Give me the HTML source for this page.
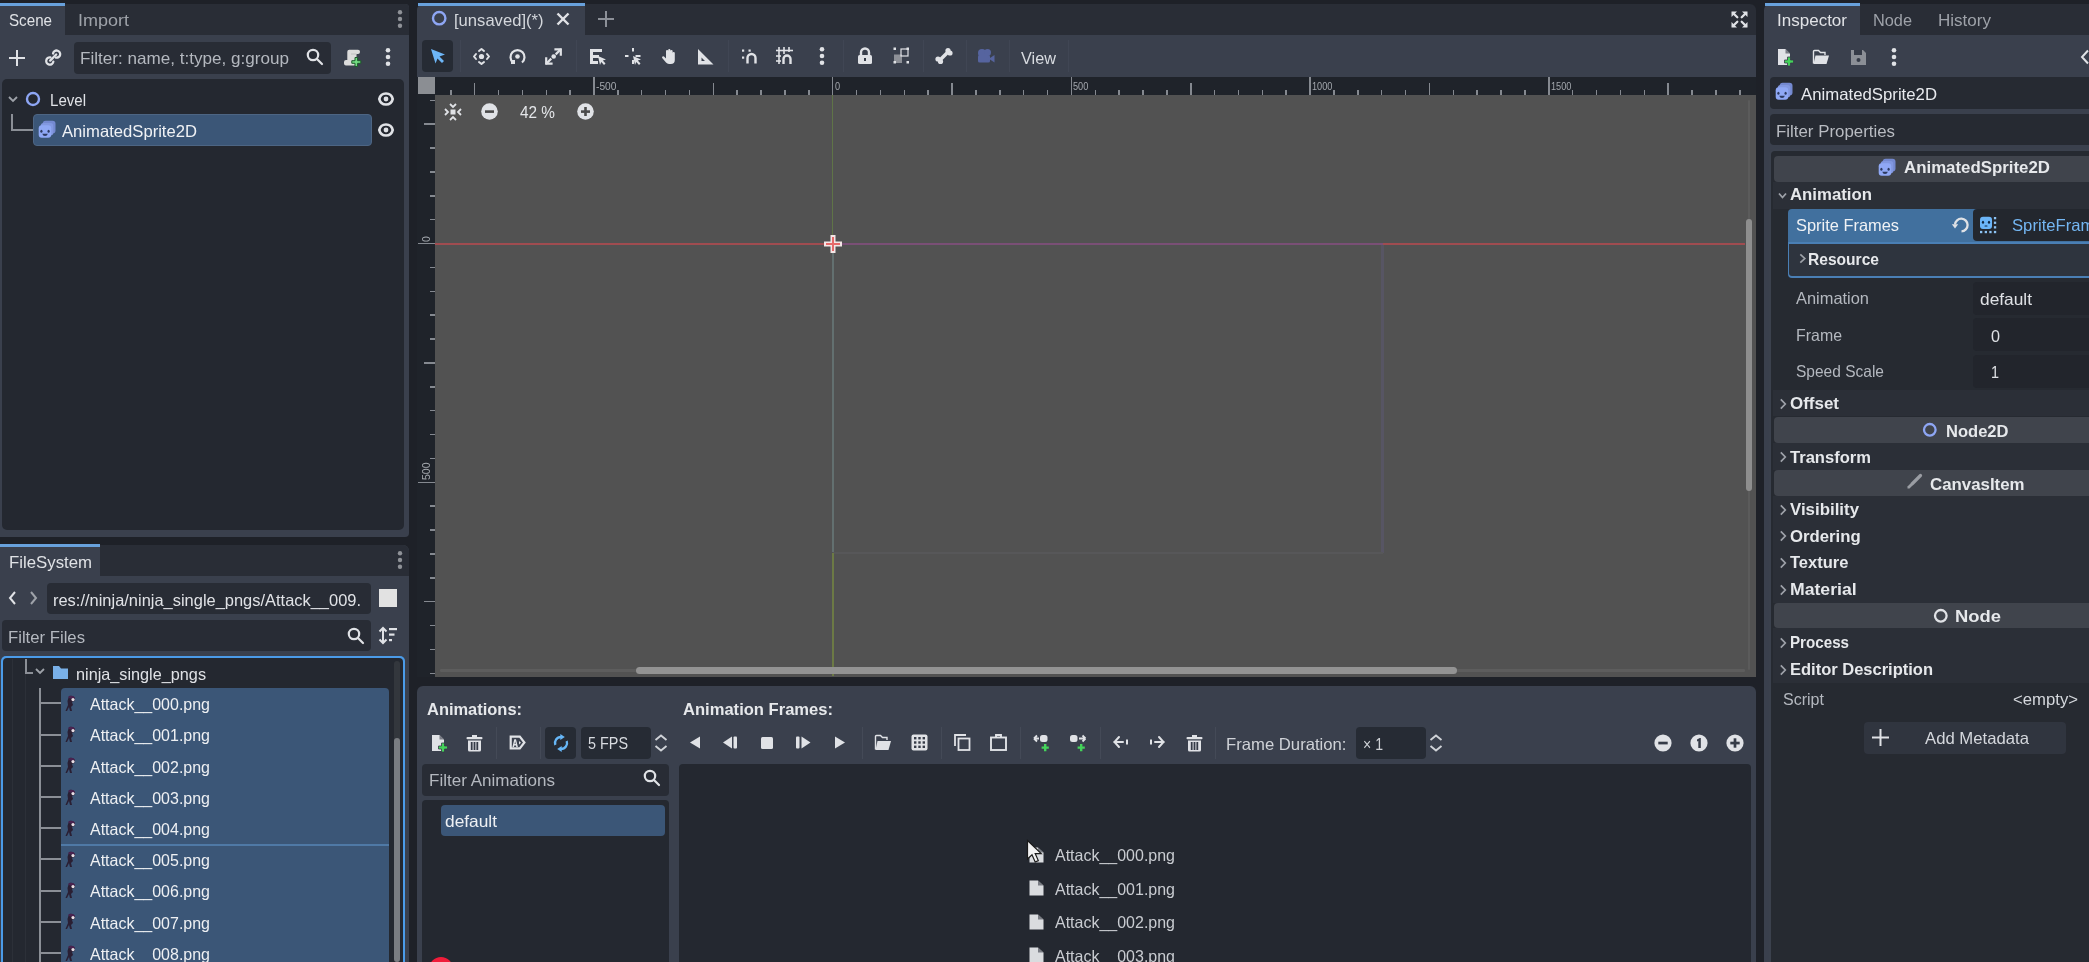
<!DOCTYPE html>
<html><head><meta charset="utf-8">
<style>
*{box-sizing:border-box;margin:0;padding:0}
body{filter:blur(0.4px)}
html,body{width:2089px;height:962px;overflow:hidden;background:#1e2128;font-family:"Liberation Sans",sans-serif;color:#dfe1e5}
.a{position:absolute}
.t{position:absolute;white-space:nowrap;line-height:20px}
svg{position:absolute;overflow:visible}
</style></head><body>

<div class="a" style="left:0px;top:4px;width:409px;height:533px;background:#3a404d;border-radius:0 4px 4px 0;"></div>
<div class="a" style="left:65px;top:4px;width:344px;height:31px;background:#292d36;border-radius:0 4px 0 0;"></div>
<div class="a" style="left:0px;top:3px;width:65px;height:3px;background:#68a1dc;border-radius:0px;"></div>
<div class="t" style="left:9px;top:10.05px;font-size:16.5px;color:#e0e2e6;transform:scaleX(0.9191);transform-origin:0 0;">Scene</div>
<div class="t" style="left:78px;top:10.05px;font-size:16.5px;color:#9ea2a9;transform:scaleX(1.0907);transform-origin:0 0;">Import</div>
<svg style="left:395.5px;top:7px;" width="8" height="24" viewBox="0 0 8 24"><g fill="#8f9298"><circle cx="4" cy="5.2" r="2.2"/><circle cx="4" cy="12" r="2.2"/><circle cx="4" cy="18.8" r="2.2"/></g></svg>
<svg style="left:9.0px;top:50.0px;" width="16" height="16" viewBox="0 0 16 16"><g stroke="#e0e2e6" stroke-width="2"><line x1="0" y1="8.0" x2="16" y2="8.0"/><line x1="8.0" y1="0" x2="8.0" y2="16"/></g></svg>
<svg style="left:44px;top:48px;" width="18" height="18" viewBox="0 0 18 18"><g stroke="#e0e2e6" stroke-width="2.3" fill="none" stroke-linecap="round"><path d="M6.43 9.45 A3.6 3.6 0 1 0 9.35 13.63"/><path d="M11.97 9.65 A3.6 3.6 0 1 0 9.05 5.48"/><path d="M6.2 12.6 L12.2 6.5"/></g></svg>
<div class="a" style="left:74px;top:42px;width:257px;height:32px;background:#282c35;border-radius:4px;"></div>
<div class="t" style="left:80px;top:47.55px;font-size:16.5px;color:#b4b8bf;transform:scaleX(1.0360);transform-origin:0 0;">Filter: name, t:type, g:group</div>
<svg style="left:306px;top:48px;" width="18" height="18" viewBox="0 0 18 18"><g stroke="#e0e2e6" stroke-width="2.2" fill="none" stroke-linecap="round"><circle cx="7" cy="7" r="5.2"/><line x1="11" y1="11" x2="16" y2="16"/></g></svg>
<svg style="left:343px;top:48px;" width="20" height="20" viewBox="0 0 20 20"><path d="M6.3 1.8 H15 a2 2 0 0 1 2 2 V4 a2 2 0 0 1 -2 2 H13.5 V15.5 a2 2 0 0 1 -2 2 H3 a2 2 0 0 1 -2 -2 V14 a2 2 0 0 1 2 -2 H4.3 V3.8 a2 2 0 0 1 2 -2Z" fill="#dcdcdc"/><path d="M8 6 H13.5" stroke="#b8b8b8" stroke-width="0.8"/><path d="M12 9.5 h2.6 v3.2 h3.2 v2.6 h-3.2 v3.2 h-2.6 v-3.2 h-3.2 v-2.6 h3.2z" fill="#72dc82" stroke="#1d5a2a" stroke-width="1"/></svg>
<svg style="left:384px;top:45px;" width="8" height="24" viewBox="0 0 8 24"><g fill="#e0e2e6"><circle cx="4" cy="5.2" r="2.3"/><circle cx="4" cy="12" r="2.3"/><circle cx="4" cy="18.8" r="2.3"/></g></svg>
<div class="a" style="left:2px;top:79px;width:402px;height:451px;background:#242830;border-radius:5px;"></div>
<svg style="left:8px;top:94px;" width="10" height="10" viewBox="0 0 10 10"><path d="M1 3 L5 7 L9 3" stroke="#9ea2a9" stroke-width="1.8" fill="none"/></svg>
<svg style="left:25px;top:90.5px;" width="16" height="16" viewBox="0 0 16 16"><circle cx="8" cy="8" r="6" stroke="#8ea6f4" stroke-width="2.4" fill="none"/></svg>
<div class="t" style="left:50px;top:89.55px;font-size:16.5px;color:#e0e2e6;transform:scaleX(0.9127);transform-origin:0 0;">Level</div>
<svg style="left:377px;top:90.5px;" width="18" height="16" viewBox="0 0 18 16"><path d="M2.3 8 C3.3 3.3 6 2.5 9 2.5 C12 2.5 14.7 3.3 15.7 8 C14.7 12.7 12 13.5 9 13.5 C6 13.5 3.3 12.7 2.3 8Z" fill="none" stroke="#e0e2e6" stroke-width="2.7"/><circle cx="9" cy="8" r="2.4" fill="#e0e2e6"/></svg>
<div class="a" style="left:11px;top:114px;width:2px;height:17px;background:#8b8f96;border-radius:0px;"></div>
<div class="a" style="left:11px;top:129px;width:22px;height:2px;background:#8b8f96;border-radius:0px;"></div>
<div class="a" style="left:33px;top:114px;width:339px;height:32px;background:#3b5677;border-radius:4px;border:1px solid #4d6583"></div>
<svg style="left:37px;top:120px;" width="20" height="20" viewBox="0 0 20 20"><g transform="scale(1.0)" transform-origin="10 10"><rect x="5.7" y="0.7" width="12.8" height="12.8" rx="3" fill="#7489d0"/><rect x="3.7" y="3" width="12.6" height="12.6" rx="3" fill="#8298e0"/><rect x="1.7" y="5.3" width="12.5" height="12.5" rx="3" fill="#8fa8f5"/><ellipse cx="4.4" cy="11.2" rx="1.1" ry="1.5" fill="#2d3a60"/><ellipse cx="11.6" cy="11.2" rx="1.1" ry="1.5" fill="#2d3a60"/><path d="M5.3 13.8 H10.8 Q10.3 16.1 8 16.1 Q5.8 16.1 5.3 13.8Z" fill="#2d3a60"/></g></svg>
<div class="t" style="left:62px;top:120.55px;font-size:16.5px;color:#f0f2f5;transform:scaleX(1.0083);transform-origin:0 0;">AnimatedSprite2D</div>
<svg style="left:377px;top:122px;" width="18" height="16" viewBox="0 0 18 16"><path d="M2.3 8 C3.3 3.3 6 2.5 9 2.5 C12 2.5 14.7 3.3 15.7 8 C14.7 12.7 12 13.5 9 13.5 C6 13.5 3.3 12.7 2.3 8Z" fill="none" stroke="#e0e2e6" stroke-width="2.7"/><circle cx="9" cy="8" r="2.4" fill="#e0e2e6"/></svg>
<div class="a" style="left:0px;top:545px;width:409px;height:417px;background:#3a404d;border-radius:0 6px 0 0;"></div>
<div class="a" style="left:100px;top:545px;width:309px;height:31px;background:#292d36;border-radius:0 6px 0 0;"></div>
<div class="a" style="left:0px;top:544px;width:100px;height:3px;background:#68a1dc;border-radius:0px;"></div>
<div class="t" style="left:9px;top:551.55px;font-size:16.5px;color:#e0e2e6;transform:scaleX(1.0172);transform-origin:0 0;">FileSystem</div>
<svg style="left:395.5px;top:548px;" width="8" height="24" viewBox="0 0 8 24"><g fill="#8f9298"><circle cx="4" cy="5.2" r="2.2"/><circle cx="4" cy="12" r="2.2"/><circle cx="4" cy="18.8" r="2.2"/></g></svg>
<svg style="left:6px;top:590px;" width="12" height="16" viewBox="0 0 12 16"><path d="M9 2 L4 8 L9 14" stroke="#e0e2e6" stroke-width="2" fill="none"/></svg>
<svg style="left:28px;top:590px;" width="12" height="16" viewBox="0 0 12 16"><path d="M3 2 L8 8 L3 14" stroke="#9ea2a9" stroke-width="2" fill="none"/></svg>
<div class="a" style="left:47px;top:583px;width:324px;height:31px;background:#282c35;border-radius:4px;"></div>
<div class="t" style="left:53px;top:589.55px;font-size:16.5px;color:#e0e2e6;transform:scaleX(0.9964);transform-origin:0 0;">res://ninja/ninja_single_pngs/Attack__009.</div>
<div class="a" style="left:379px;top:589px;width:18px;height:18px;background:#e2e2e2;border-radius:0px;"></div>
<div class="a" style="left:2px;top:620px;width:369px;height:31px;background:#282c35;border-radius:4px;"></div>
<div class="t" style="left:8px;top:626.55px;font-size:16.5px;color:#b4b8bf;transform:scaleX(1.0121);transform-origin:0 0;">Filter Files</div>
<svg style="left:347px;top:627px;" width="18" height="18" viewBox="0 0 18 18"><g stroke="#e0e2e6" stroke-width="2.2" fill="none" stroke-linecap="round"><circle cx="7" cy="7" r="5.2"/><line x1="11" y1="11" x2="16" y2="16"/></g></svg>
<svg style="left:378px;top:626px;" width="20" height="20" viewBox="0 0 20 20"><g fill="none" stroke="#e0e2e6" stroke-width="2"><path d="M5 2 V17"/><path d="M1.5 5.5 L5 2 L8.5 5.5"/><path d="M1.5 13.5 L5 17 L8.5 13.5"/></g><g fill="#e0e2e6"><rect x="11" y="2" width="8" height="2.2"/><rect x="11" y="7.5" width="5.5" height="2.2"/><rect x="11" y="13" width="3" height="2.2"/></g></svg>
<div class="a" style="left:1px;top:656px;width:404px;height:306px;background:#4b9be8;border-radius:5px 5px 0 0;"></div>
<div class="a" style="left:3px;top:658px;width:400px;height:304px;background:#242830;border-radius:4px 4px 0 0;"></div>
<div class="a" style="left:12px;top:659px;width:1px;height:303px;background:#2c3038;border-radius:0px;"></div>
<div class="a" style="left:25px;top:659px;width:1px;height:303px;background:#2c3038;border-radius:0px;"></div>
<div class="a" style="left:25px;top:659px;width:2px;height:15px;background:#8b8f96;border-radius:0px;"></div>
<div class="a" style="left:25px;top:672px;width:8px;height:2px;background:#8b8f96;border-radius:0px;"></div>
<svg style="left:35px;top:666px;" width="10" height="10" viewBox="0 0 10 10"><path d="M1 3 L5 7 L9 3" stroke="#9ea2a9" stroke-width="1.8" fill="none"/></svg>
<svg style="left:52px;top:664px;" width="17" height="16" viewBox="0 0 17 16"><path d="M1 2 h6 l2 2.5 h7 v10.5 h-15z" fill="#79b0e8"/></svg>
<div class="t" style="left:76px;top:663.55px;font-size:16.5px;color:#e0e2e6;transform:scaleX(0.9841);transform-origin:0 0;">ninja_single_pngs</div>
<div class="a" style="left:394px;top:661px;width:6px;height:301px;background:#33373d;border-radius:3px;"></div>
<div class="a" style="left:394px;top:738px;width:6px;height:224px;background:#7a7d82;border-radius:3px;"></div>
<div class="a" style="left:39px;top:688px;width:2px;height:274px;background:#8b8f96;border-radius:0px;"></div>
<div class="a" style="left:61px;top:688px;width:328px;height:274px;background:#3b5677;border-radius:4px 4px 0 0;"></div>
<div class="a" style="left:61px;top:844px;width:328px;height:1.5px;background:#4f79a6;border-radius:0px;"></div>
<div class="a" style="left:40px;top:702.4px;width:21px;height:2px;background:#8b8f96;border-radius:0px;"></div>
<svg style="left:65px;top:694.9px;" width="12" height="17" viewBox="0 0 12 17"><path d="M4 1 Q8 0 10 3 L9.5 6 L7 7 L8 10 L6 12 L7 16 L5 16 L4 12 L2 16 L0.5 16 L3 10 L2.5 6Z" fill="#2a1f33"/><path d="M3 2 Q7 -0.5 10 2.5 L9 4 L5 3.5Z" fill="#4a2350"/><circle cx="8" cy="4.6" r="1.6" fill="#e8e0e6"/></svg>
<div class="t" style="left:90px;top:694.25px;font-size:16.5px;color:#eef0f3;transform:scaleX(0.9690);transform-origin:0 0;">Attack__000.png</div>
<div class="a" style="left:40px;top:733.6px;width:21px;height:2px;background:#8b8f96;border-radius:0px;"></div>
<svg style="left:65px;top:726.1px;" width="12" height="17" viewBox="0 0 12 17"><path d="M4 1 Q8 0 10 3 L9.5 6 L7 7 L8 10 L6 12 L7 16 L5 16 L4 12 L2 16 L0.5 16 L3 10 L2.5 6Z" fill="#2a1f33"/><path d="M3 2 Q7 -0.5 10 2.5 L9 4 L5 3.5Z" fill="#4a2350"/><circle cx="8" cy="4.6" r="1.6" fill="#e8e0e6"/></svg>
<div class="t" style="left:90px;top:725.45px;font-size:16.5px;color:#eef0f3;transform:scaleX(0.9690);transform-origin:0 0;">Attack__001.png</div>
<div class="a" style="left:40px;top:764.8px;width:21px;height:2px;background:#8b8f96;border-radius:0px;"></div>
<svg style="left:65px;top:757.3px;" width="12" height="17" viewBox="0 0 12 17"><path d="M4 1 Q8 0 10 3 L9.5 6 L7 7 L8 10 L6 12 L7 16 L5 16 L4 12 L2 16 L0.5 16 L3 10 L2.5 6Z" fill="#2a1f33"/><path d="M3 2 Q7 -0.5 10 2.5 L9 4 L5 3.5Z" fill="#4a2350"/><circle cx="8" cy="4.6" r="1.6" fill="#e8e0e6"/></svg>
<div class="t" style="left:90px;top:756.65px;font-size:16.5px;color:#eef0f3;transform:scaleX(0.9690);transform-origin:0 0;">Attack__002.png</div>
<div class="a" style="left:40px;top:796.0px;width:21px;height:2px;background:#8b8f96;border-radius:0px;"></div>
<svg style="left:65px;top:788.5px;" width="12" height="17" viewBox="0 0 12 17"><path d="M4 1 Q8 0 10 3 L9.5 6 L7 7 L8 10 L6 12 L7 16 L5 16 L4 12 L2 16 L0.5 16 L3 10 L2.5 6Z" fill="#2a1f33"/><path d="M3 2 Q7 -0.5 10 2.5 L9 4 L5 3.5Z" fill="#4a2350"/><circle cx="8" cy="4.6" r="1.6" fill="#e8e0e6"/></svg>
<div class="t" style="left:90px;top:787.85px;font-size:16.5px;color:#eef0f3;transform:scaleX(0.9690);transform-origin:0 0;">Attack__003.png</div>
<div class="a" style="left:40px;top:827.1999999999999px;width:21px;height:2px;background:#8b8f96;border-radius:0px;"></div>
<svg style="left:65px;top:819.6999999999999px;" width="12" height="17" viewBox="0 0 12 17"><path d="M4 1 Q8 0 10 3 L9.5 6 L7 7 L8 10 L6 12 L7 16 L5 16 L4 12 L2 16 L0.5 16 L3 10 L2.5 6Z" fill="#2a1f33"/><path d="M3 2 Q7 -0.5 10 2.5 L9 4 L5 3.5Z" fill="#4a2350"/><circle cx="8" cy="4.6" r="1.6" fill="#e8e0e6"/></svg>
<div class="t" style="left:90px;top:819.05px;font-size:16.5px;color:#eef0f3;transform:scaleX(0.9690);transform-origin:0 0;">Attack__004.png</div>
<div class="a" style="left:40px;top:858.4px;width:21px;height:2px;background:#8b8f96;border-radius:0px;"></div>
<svg style="left:65px;top:850.9px;" width="12" height="17" viewBox="0 0 12 17"><path d="M4 1 Q8 0 10 3 L9.5 6 L7 7 L8 10 L6 12 L7 16 L5 16 L4 12 L2 16 L0.5 16 L3 10 L2.5 6Z" fill="#2a1f33"/><path d="M3 2 Q7 -0.5 10 2.5 L9 4 L5 3.5Z" fill="#4a2350"/><circle cx="8" cy="4.6" r="1.6" fill="#e8e0e6"/></svg>
<div class="t" style="left:90px;top:850.25px;font-size:16.5px;color:#eef0f3;transform:scaleX(0.9690);transform-origin:0 0;">Attack__005.png</div>
<div class="a" style="left:40px;top:889.5999999999999px;width:21px;height:2px;background:#8b8f96;border-radius:0px;"></div>
<svg style="left:65px;top:882.0999999999999px;" width="12" height="17" viewBox="0 0 12 17"><path d="M4 1 Q8 0 10 3 L9.5 6 L7 7 L8 10 L6 12 L7 16 L5 16 L4 12 L2 16 L0.5 16 L3 10 L2.5 6Z" fill="#2a1f33"/><path d="M3 2 Q7 -0.5 10 2.5 L9 4 L5 3.5Z" fill="#4a2350"/><circle cx="8" cy="4.6" r="1.6" fill="#e8e0e6"/></svg>
<div class="t" style="left:90px;top:881.45px;font-size:16.5px;color:#eef0f3;transform:scaleX(0.9690);transform-origin:0 0;">Attack__006.png</div>
<div class="a" style="left:40px;top:920.8px;width:21px;height:2px;background:#8b8f96;border-radius:0px;"></div>
<svg style="left:65px;top:913.3px;" width="12" height="17" viewBox="0 0 12 17"><path d="M4 1 Q8 0 10 3 L9.5 6 L7 7 L8 10 L6 12 L7 16 L5 16 L4 12 L2 16 L0.5 16 L3 10 L2.5 6Z" fill="#2a1f33"/><path d="M3 2 Q7 -0.5 10 2.5 L9 4 L5 3.5Z" fill="#4a2350"/><circle cx="8" cy="4.6" r="1.6" fill="#e8e0e6"/></svg>
<div class="t" style="left:90px;top:912.65px;font-size:16.5px;color:#eef0f3;transform:scaleX(0.9690);transform-origin:0 0;">Attack__007.png</div>
<div class="a" style="left:40px;top:952.0px;width:21px;height:2px;background:#8b8f96;border-radius:0px;"></div>
<svg style="left:65px;top:944.5px;" width="12" height="17" viewBox="0 0 12 17"><path d="M4 1 Q8 0 10 3 L9.5 6 L7 7 L8 10 L6 12 L7 16 L5 16 L4 12 L2 16 L0.5 16 L3 10 L2.5 6Z" fill="#2a1f33"/><path d="M3 2 Q7 -0.5 10 2.5 L9 4 L5 3.5Z" fill="#4a2350"/><circle cx="8" cy="4.6" r="1.6" fill="#e8e0e6"/></svg>
<div class="t" style="left:90px;top:943.85px;font-size:16.5px;color:#eef0f3;transform:scaleX(0.9690);transform-origin:0 0;">Attack__008.png</div>
<div class="a" style="left:417px;top:4px;width:1339px;height:31px;background:#292d36;border-radius:6px 6px 0 0;"></div>
<div class="a" style="left:417px;top:4px;width:168px;height:31px;background:#3a404d;border-radius:6px 0 0 0;"></div>
<div class="a" style="left:418px;top:3px;width:167px;height:3px;background:#68a1dc;border-radius:0px;"></div>
<svg style="left:430.8px;top:10.400000000000002px;" width="16.4" height="16.4" viewBox="0 0 16.4 16.4"><circle cx="8.2" cy="8.2" r="6.2" stroke="#8ea6f4" stroke-width="2.4" fill="none"/></svg>
<div class="t" style="left:453.5px;top:9.55px;font-size:16.5px;color:#d4d7dc;transform:scaleX(1.0061);transform-origin:0 0;">[unsaved](*)</div>
<svg style="left:556px;top:12px;" width="14" height="14" viewBox="0 0 14 14"><g stroke="#e0e2e6" stroke-width="2.4"><line x1="1.5" y1="1.5" x2="12.5" y2="12.5"/><line x1="12.5" y1="1.5" x2="1.5" y2="12.5"/></g></svg>
<svg style="left:597.5px;top:11.0px;" width="16" height="16" viewBox="0 0 16 16"><g stroke="#8c9098" stroke-width="2"><line x1="0" y1="8.0" x2="16" y2="8.0"/><line x1="8.0" y1="0" x2="8.0" y2="16"/></g></svg>
<svg style="left:1731px;top:10.5px;" width="17" height="17" viewBox="0 0 17 17"><g fill="#e0e2e6"><path d="M0.5 0.5 H6 L0.5 6Z"/><path d="M16.5 0.5 H11 L16.5 6Z"/><path d="M0.5 16.5 H6 L0.5 11Z"/><path d="M16.5 16.5 H11 L16.5 11Z"/></g><g stroke="#e0e2e6" stroke-width="2.3" stroke-linecap="round"><path d="M2 2 L6.3 6.3"/><path d="M15 2 L10.7 6.3"/><path d="M2 15 L6.3 10.7"/><path d="M15 15 L10.7 10.7"/></g></svg>
<div class="a" style="left:417px;top:35px;width:1339px;height:42px;background:#3a404d;border-radius:0px;"></div>
<div class="a" style="left:422px;top:40px;width:31px;height:32px;background:#262b34;border-radius:4px;"></div>
<div class="a" style="left:459.5px;top:40px;width:1px;height:32px;background:#404654;border-radius:0px;"></div>
<div class="a" style="left:575.5px;top:40px;width:1px;height:32px;background:#404654;border-radius:0px;"></div>
<div class="a" style="left:727.5px;top:40px;width:1px;height:32px;background:#404654;border-radius:0px;"></div>
<div class="a" style="left:843px;top:40px;width:1px;height:32px;background:#404654;border-radius:0px;"></div>
<div class="a" style="left:922.5px;top:40px;width:1px;height:32px;background:#404654;border-radius:0px;"></div>
<div class="a" style="left:965.5px;top:40px;width:1px;height:32px;background:#404654;border-radius:0px;"></div>
<div class="a" style="left:1008.5px;top:40px;width:1px;height:32px;background:#404654;border-radius:0px;"></div>
<div class="a" style="left:1068px;top:40px;width:1px;height:32px;background:#404654;border-radius:0px;"></div>
<svg style="left:429px;top:47px;" width="18" height="18" viewBox="0 0 18 18"><path d="M2 2 L16 7.5 L10.5 9.5 L15 14 L13 16 L8.5 11.5 L6.5 16.5 Z" fill="#6db6f7"/></svg>
<svg style="left:473px;top:47.5px;" width="17" height="17" viewBox="0 0 17 17"><g fill="#e0e2e6"><circle cx="8.5" cy="8.5" r="2.6"/></g><g stroke="#e0e2e6" stroke-width="2" fill="none" stroke-linecap="round" stroke-linejoin="round"><path d="M6 3 L8.5 1 L11 3"/><path d="M6 14 L8.5 16 L11 14"/><path d="M3 6 L1 8.5 L3 11"/><path d="M14 6 L16 8.5 L14 11"/></g></svg>
<svg style="left:509px;top:47.5px;" width="17" height="17" viewBox="0 0 17 17"><circle cx="8.5" cy="8.5" r="2.3" fill="#e0e2e6"/><path d="M4 14.5 A7 7 0 1 1 13 14.5" stroke="#e0e2e6" stroke-width="2.2" fill="none"/><path d="M2 12 L6 12 L6 16 L2 16z" fill="#e0e2e6"/></svg>
<svg style="left:545px;top:47.5px;" width="17" height="17" viewBox="0 0 17 17"><circle cx="8.7" cy="8.5" r="2.3" fill="#e0e2e6"/><g stroke="#e0e2e6" stroke-width="2.2" fill="none" stroke-linecap="square"><path d="M10.5 1.3 H15.8 V6.6"/><path d="M15.3 1.8 L11.5 5.6"/><path d="M1.2 10.4 V15.7 H6.5"/><path d="M1.7 15.2 L5.5 11.4"/></g></svg>
<svg style="left:589px;top:48px;" width="18" height="17" viewBox="0 0 18 17"><path d="M1 1 H13 V4 H4 V7 H10 V10 H4 V13 H9 V16 H1Z" fill="#e0e2e6"/><path d="M9 8 L17 11.5 L13.8 12.5 L16.5 15.5 L15 17 L12.3 14 L11 17Z" fill="#e0e2e6"/></svg>
<svg style="left:625px;top:48px;" width="17" height="17" viewBox="0 0 17 17"><g fill="#e0e2e6"><rect x="7" y="0" width="2" height="3.5"/><rect x="0" y="7" width="3.5" height="2"/><rect x="10.5" y="7" width="5" height="2"/><rect x="7" y="12" width="2" height="4"/><path d="M8 8 L16 11.5 L12.8 12.5 L15.5 15.5 L14 17 L11.3 14 L10 17Z"/></g></svg>
<svg style="left:661px;top:47.5px;" width="17" height="17" viewBox="0 0 17 17"><path d="M5 3 a1.1 1.1 0 0 1 2.2 0 V8 V2 a1.1 1.1 0 0 1 2.2 0 V8 V3 a1.1 1.1 0 0 1 2.2 0 V8 V5 a1.1 1.1 0 0 1 2.2 0 V12 a4 4 0 0 1 -4 4 H8 a4 4 0 0 1 -3 -1.5 L1.2 10 a1.2 1.2 0 0 1 1.8 -1.5 L5 10.5Z" fill="#e0e2e6"/></svg>
<svg style="left:697px;top:47.5px;" width="17" height="17" viewBox="0 0 17 17"><path d="M1 1 L16.5 16.5 H1Z M4.5 9.5 V13 H8Z" fill="#e0e2e6" fill-rule="evenodd"/></svg>
<svg style="left:741px;top:47px;" width="18" height="18" viewBox="0 0 18 18"><g fill="#e0e2e6"><rect x="1" y="2.5" width="2.2" height="2.2"/><rect x="1" y="9.5" width="2.2" height="2.2"/><rect x="7.5" y="2.5" width="2.2" height="2.2"/></g><path d="M6.5 16.5 V11 a4 4 0 0 1 8 0 V16.5" stroke="#e0e2e6" stroke-width="2.4" fill="none"/></svg>
<svg style="left:776px;top:47px;" width="18" height="18" viewBox="0 0 18 18"><g stroke="#e0e2e6" stroke-width="1.6"><line x1="3" y1="0" x2="3" y2="17"/><line x1="8" y1="0" x2="8" y2="7"/><line x1="0" y1="3.5" x2="17" y2="3.5"/><line x1="0" y1="9" x2="5" y2="9"/><line x1="0" y1="14" x2="5" y2="14"/><line x1="13" y1="0" x2="13" y2="5"/></g><path d="M7.5 17 V12 a3.5 3.5 0 0 1 7 0 V17" stroke="#e0e2e6" stroke-width="2.4" fill="none"/></svg>
<svg style="left:817.5px;top:44px;" width="8" height="24" viewBox="0 0 8 24"><g fill="#e0e2e6"><circle cx="4" cy="5.2" r="2.3"/><circle cx="4" cy="12" r="2.3"/><circle cx="4" cy="18.8" r="2.3"/></g></svg>
<svg style="left:857px;top:47px;" width="16" height="18" viewBox="0 0 16 18"><path d="M4 8 V5.5 a4 4 0 0 1 8 0 V8" stroke="#e0e2e6" stroke-width="2.4" fill="none"/><rect x="1" y="8" width="14" height="9" rx="1.5" fill="#e0e2e6"/><rect x="7" y="11" width="2" height="3" fill="#353b47"/></svg>
<svg style="left:893px;top:47px;" width="17" height="17" viewBox="0 0 17 17"><rect x="1" y="7.5" width="8" height="8.5" fill="#8d9097"/><rect x="8" y="2" width="7" height="7" stroke="#e0e2e6" stroke-width="1.2" fill="none"/><g fill="#e0e2e6"><rect x="0.5" y="0.5" width="2.5" height="2.5"/><rect x="13.5" y="0.5" width="2.5" height="2.5"/><rect x="0.5" y="14" width="2.5" height="2.5"/><rect x="13.5" y="14" width="2.5" height="2.5"/></g></svg>
<svg style="left:935px;top:47px;" width="18" height="18" viewBox="0 0 18 18"><g fill="#e0e2e6"><circle cx="13" cy="3.5" r="2.6"/><circle cx="15" cy="6" r="2.6"/><circle cx="3" cy="12" r="2.6"/><circle cx="5.5" cy="14.5" r="2.6"/><path d="M11.5 4 L14 6.5 L6.5 14 L4 11.5Z"/></g></svg>
<svg style="left:977px;top:48px;" width="18" height="16" viewBox="0 0 18 16"><g fill="#56649f"><circle cx="5" cy="5" r="4"/><circle cx="10.5" cy="4.5" r="3.5"/><rect x="1" y="7" width="12" height="7.5" rx="1.5"/><path d="M13 10 L17.5 7 V14.5 L13 11.5Z"/></g></svg>
<div class="t" style="left:1021px;top:47.55px;font-size:16.5px;color:#d8dbe0;transform:scaleX(0.9869);transform-origin:0 0;">View</div>
<div class="a" style="left:417px;top:77px;width:1339px;height:18px;background:#1f232a;border-radius:0px;"></div>
<div class="a" style="left:417px;top:95px;width:18px;height:582px;background:#1f232a;border-radius:0px;"></div>
<div class="a" style="left:418px;top:77px;width:17px;height:17px;background:#8b8e93;border-radius:0px;"></div>
<div class="a" style="left:450.0px;top:90px;width:1.6px;height:4.5px;background:#858990;border-radius:0px;"></div>
<div class="a" style="left:473.9px;top:83px;width:1.6px;height:11.5px;background:#858990;border-radius:0px;"></div>
<div class="a" style="left:497.7px;top:90px;width:1.6px;height:4.5px;background:#858990;border-radius:0px;"></div>
<div class="a" style="left:521.6px;top:90px;width:1.6px;height:4.5px;background:#858990;border-radius:0px;"></div>
<div class="a" style="left:545.5px;top:90px;width:1.6px;height:4.5px;background:#858990;border-radius:0px;"></div>
<div class="a" style="left:569.3px;top:90px;width:1.6px;height:4.5px;background:#858990;border-radius:0px;"></div>
<div class="a" style="left:593.2px;top:77px;width:1.6px;height:17.5px;background:#858990;border-radius:0px;"></div>
<div class="t" style="left:596.0px;top:76.03px;font-size:10.5px;color:#a3a7ad;transform:scaleX(0.9708);transform-origin:0 0;">-500</div>
<div class="a" style="left:617.1px;top:90px;width:1.6px;height:4.5px;background:#858990;border-radius:0px;"></div>
<div class="a" style="left:640.9px;top:90px;width:1.6px;height:4.5px;background:#858990;border-radius:0px;"></div>
<div class="a" style="left:664.8px;top:90px;width:1.6px;height:4.5px;background:#858990;border-radius:0px;"></div>
<div class="a" style="left:688.7px;top:90px;width:1.6px;height:4.5px;background:#858990;border-radius:0px;"></div>
<div class="a" style="left:712.6px;top:83px;width:1.6px;height:11.5px;background:#858990;border-radius:0px;"></div>
<div class="a" style="left:736.4px;top:90px;width:1.6px;height:4.5px;background:#858990;border-radius:0px;"></div>
<div class="a" style="left:760.3px;top:90px;width:1.6px;height:4.5px;background:#858990;border-radius:0px;"></div>
<div class="a" style="left:784.2px;top:90px;width:1.6px;height:4.5px;background:#858990;border-radius:0px;"></div>
<div class="a" style="left:808.0px;top:90px;width:1.6px;height:4.5px;background:#858990;border-radius:0px;"></div>
<div class="a" style="left:831.9px;top:77px;width:1.6px;height:17.5px;background:#858990;border-radius:0px;"></div>
<div class="t" style="left:834.7px;top:76.03px;font-size:10.5px;color:#a3a7ad;transform:scaleX(0.8734);transform-origin:0 0;">0</div>
<div class="a" style="left:855.8px;top:90px;width:1.6px;height:4.5px;background:#858990;border-radius:0px;"></div>
<div class="a" style="left:879.6px;top:90px;width:1.6px;height:4.5px;background:#858990;border-radius:0px;"></div>
<div class="a" style="left:903.5px;top:90px;width:1.6px;height:4.5px;background:#858990;border-radius:0px;"></div>
<div class="a" style="left:927.4px;top:90px;width:1.6px;height:4.5px;background:#858990;border-radius:0px;"></div>
<div class="a" style="left:951.3px;top:83px;width:1.6px;height:11.5px;background:#858990;border-radius:0px;"></div>
<div class="a" style="left:975.1px;top:90px;width:1.6px;height:4.5px;background:#858990;border-radius:0px;"></div>
<div class="a" style="left:999.0px;top:90px;width:1.6px;height:4.5px;background:#858990;border-radius:0px;"></div>
<div class="a" style="left:1022.9px;top:90px;width:1.6px;height:4.5px;background:#858990;border-radius:0px;"></div>
<div class="a" style="left:1046.7px;top:90px;width:1.6px;height:4.5px;background:#858990;border-radius:0px;"></div>
<div class="a" style="left:1070.6px;top:77px;width:1.6px;height:17.5px;background:#858990;border-radius:0px;"></div>
<div class="t" style="left:1073.4px;top:76.03px;font-size:10.5px;color:#a3a7ad;transform:scaleX(0.8734);transform-origin:0 0;">500</div>
<div class="a" style="left:1094.5px;top:90px;width:1.6px;height:4.5px;background:#858990;border-radius:0px;"></div>
<div class="a" style="left:1118.3px;top:90px;width:1.6px;height:4.5px;background:#858990;border-radius:0px;"></div>
<div class="a" style="left:1142.2px;top:90px;width:1.6px;height:4.5px;background:#858990;border-radius:0px;"></div>
<div class="a" style="left:1166.1px;top:90px;width:1.6px;height:4.5px;background:#858990;border-radius:0px;"></div>
<div class="a" style="left:1190.0px;top:83px;width:1.6px;height:11.5px;background:#858990;border-radius:0px;"></div>
<div class="a" style="left:1213.8px;top:90px;width:1.6px;height:4.5px;background:#858990;border-radius:0px;"></div>
<div class="a" style="left:1237.7px;top:90px;width:1.6px;height:4.5px;background:#858990;border-radius:0px;"></div>
<div class="a" style="left:1261.6px;top:90px;width:1.6px;height:4.5px;background:#858990;border-radius:0px;"></div>
<div class="a" style="left:1285.4px;top:90px;width:1.6px;height:4.5px;background:#858990;border-radius:0px;"></div>
<div class="a" style="left:1309.3px;top:77px;width:1.6px;height:17.5px;background:#858990;border-radius:0px;"></div>
<div class="t" style="left:1312.1px;top:76.03px;font-size:10.5px;color:#a3a7ad;transform:scaleX(0.8734);transform-origin:0 0;">1000</div>
<div class="a" style="left:1333.2px;top:90px;width:1.6px;height:4.5px;background:#858990;border-radius:0px;"></div>
<div class="a" style="left:1357.0px;top:90px;width:1.6px;height:4.5px;background:#858990;border-radius:0px;"></div>
<div class="a" style="left:1380.9px;top:90px;width:1.6px;height:4.5px;background:#858990;border-radius:0px;"></div>
<div class="a" style="left:1404.8px;top:90px;width:1.6px;height:4.5px;background:#858990;border-radius:0px;"></div>
<div class="a" style="left:1428.7px;top:83px;width:1.6px;height:11.5px;background:#858990;border-radius:0px;"></div>
<div class="a" style="left:1452.5px;top:90px;width:1.6px;height:4.5px;background:#858990;border-radius:0px;"></div>
<div class="a" style="left:1476.4px;top:90px;width:1.6px;height:4.5px;background:#858990;border-radius:0px;"></div>
<div class="a" style="left:1500.3px;top:90px;width:1.6px;height:4.5px;background:#858990;border-radius:0px;"></div>
<div class="a" style="left:1524.1px;top:90px;width:1.6px;height:4.5px;background:#858990;border-radius:0px;"></div>
<div class="a" style="left:1548.0px;top:77px;width:1.6px;height:17.5px;background:#858990;border-radius:0px;"></div>
<div class="t" style="left:1550.8px;top:76.03px;font-size:10.5px;color:#a3a7ad;transform:scaleX(0.8734);transform-origin:0 0;">1500</div>
<div class="a" style="left:1571.9px;top:90px;width:1.6px;height:4.5px;background:#858990;border-radius:0px;"></div>
<div class="a" style="left:1595.7px;top:90px;width:1.6px;height:4.5px;background:#858990;border-radius:0px;"></div>
<div class="a" style="left:1619.6px;top:90px;width:1.6px;height:4.5px;background:#858990;border-radius:0px;"></div>
<div class="a" style="left:1643.5px;top:90px;width:1.6px;height:4.5px;background:#858990;border-radius:0px;"></div>
<div class="a" style="left:1667.4px;top:83px;width:1.6px;height:11.5px;background:#858990;border-radius:0px;"></div>
<div class="a" style="left:1691.2px;top:90px;width:1.6px;height:4.5px;background:#858990;border-radius:0px;"></div>
<div class="a" style="left:1715.1px;top:90px;width:1.6px;height:4.5px;background:#858990;border-radius:0px;"></div>
<div class="a" style="left:1739.0px;top:90px;width:1.6px;height:4.5px;background:#858990;border-radius:0px;"></div>
<div class="a" style="left:430px;top:99.6px;width:5px;height:1.6px;background:#858990;border-radius:0px;"></div>
<div class="a" style="left:424px;top:123.4px;width:11.5px;height:1.6px;background:#858990;border-radius:0px;"></div>
<div class="a" style="left:430px;top:147.3px;width:5px;height:1.6px;background:#858990;border-radius:0px;"></div>
<div class="a" style="left:430px;top:171.2px;width:5px;height:1.6px;background:#858990;border-radius:0px;"></div>
<div class="a" style="left:430px;top:195.1px;width:5px;height:1.6px;background:#858990;border-radius:0px;"></div>
<div class="a" style="left:430px;top:218.9px;width:5px;height:1.6px;background:#858990;border-radius:0px;"></div>
<div class="a" style="left:418px;top:242.8px;width:17.5px;height:1.6px;background:#858990;border-radius:0px;"></div>
<div class="t" style="left:421px;top:241.6px;font-size:10.5px;color:#a3a7ad;transform:rotate(-90deg);transform-origin:0 0;line-height:11px">0</div>
<div class="a" style="left:430px;top:266.7px;width:5px;height:1.6px;background:#858990;border-radius:0px;"></div>
<div class="a" style="left:430px;top:290.5px;width:5px;height:1.6px;background:#858990;border-radius:0px;"></div>
<div class="a" style="left:430px;top:314.4px;width:5px;height:1.6px;background:#858990;border-radius:0px;"></div>
<div class="a" style="left:430px;top:338.3px;width:5px;height:1.6px;background:#858990;border-radius:0px;"></div>
<div class="a" style="left:424px;top:362.1px;width:11.5px;height:1.6px;background:#858990;border-radius:0px;"></div>
<div class="a" style="left:430px;top:386.0px;width:5px;height:1.6px;background:#858990;border-radius:0px;"></div>
<div class="a" style="left:430px;top:409.9px;width:5px;height:1.6px;background:#858990;border-radius:0px;"></div>
<div class="a" style="left:430px;top:433.8px;width:5px;height:1.6px;background:#858990;border-radius:0px;"></div>
<div class="a" style="left:430px;top:457.6px;width:5px;height:1.6px;background:#858990;border-radius:0px;"></div>
<div class="a" style="left:418px;top:481.5px;width:17.5px;height:1.6px;background:#858990;border-radius:0px;"></div>
<div class="t" style="left:421px;top:480.3px;font-size:10.5px;color:#a3a7ad;transform:rotate(-90deg);transform-origin:0 0;line-height:11px">500</div>
<div class="a" style="left:430px;top:505.4px;width:5px;height:1.6px;background:#858990;border-radius:0px;"></div>
<div class="a" style="left:430px;top:529.2px;width:5px;height:1.6px;background:#858990;border-radius:0px;"></div>
<div class="a" style="left:430px;top:553.1px;width:5px;height:1.6px;background:#858990;border-radius:0px;"></div>
<div class="a" style="left:430px;top:577.0px;width:5px;height:1.6px;background:#858990;border-radius:0px;"></div>
<div class="a" style="left:424px;top:600.9px;width:11.5px;height:1.6px;background:#858990;border-radius:0px;"></div>
<div class="a" style="left:430px;top:624.7px;width:5px;height:1.6px;background:#858990;border-radius:0px;"></div>
<div class="a" style="left:430px;top:648.6px;width:5px;height:1.6px;background:#858990;border-radius:0px;"></div>
<div class="a" style="left:430px;top:672.5px;width:5px;height:1.6px;background:#858990;border-radius:0px;"></div>
<div class="a" style="left:435px;top:95px;width:1321px;height:582px;background:#525252;border-radius:0px;"></div>
<div class="a" style="left:1381.3px;top:244px;width:2.4px;height:309px;background:#575563;border-radius:0px;"></div>
<div class="a" style="left:833px;top:552px;width:550px;height:2px;background:#575759;border-radius:0px;"></div>
<div class="a" style="left:435px;top:242.5px;width:397px;height:2.4px;background:#a04c50;border-radius:0px;"></div>
<div class="a" style="left:832px;top:242.5px;width:551px;height:2.4px;background:#7a4f76;border-radius:0px;"></div>
<div class="a" style="left:1383px;top:242.5px;width:362px;height:2.4px;background:#a04c50;border-radius:0px;"></div>
<div class="a" style="left:831.7px;top:95px;width:1.7px;height:148px;background:#5f7447;border-radius:0px;"></div>
<div class="a" style="left:831.6px;top:244px;width:2px;height:308px;background:#637070;border-radius:0px;"></div>
<div class="a" style="left:831.6px;top:553px;width:2px;height:123px;background:#6c7a45;border-radius:0px;"></div>
<svg style="left:823px;top:234px;" width="20" height="20" viewBox="0 0 20 20"><path d="M7.5 1 H12.5 V7.5 H19 V12.5 H12.5 V19 H7.5 V12.5 H1 V7.5 H7.5Z" fill="#f4e6e6"/><path d="M9 3 H11 V9 H17 V11 H11 V17 H9 V11 H3 V9 H9Z" fill="#e66a6a"/></svg>
<div class="a" style="left:1747.5px;top:100px;width:2.5px;height:570px;background:#5b5b5b;border-radius:1px;"></div>
<div class="a" style="left:1745.5px;top:219px;width:6.5px;height:272px;background:#8e8e8e;border-radius:3px;"></div>
<div class="a" style="left:440px;top:669px;width:1305px;height:2.5px;background:#5d5d5d;border-radius:1px;"></div>
<div class="a" style="left:636px;top:666.6px;width:821px;height:7px;background:#939393;border-radius:3.5px;"></div>
<svg style="left:444px;top:102.5px;" width="18" height="18" viewBox="0 0 18 18"><g fill="#e0e2e6"><rect x="6.5" y="6.5" width="5" height="5"/></g><g stroke="#e0e2e6" stroke-width="1.8" fill="none"><path d="M6 1 L9 4 L12 1"/><path d="M6 17 L9 14 L12 17"/><path d="M1 6 L4 9 L1 12"/><path d="M17 6 L14 9 L17 12"/></g></svg>
<svg style="left:481px;top:103px;" width="17" height="17" viewBox="0 0 17 17"><circle cx="8.5" cy="8.5" r="8.3" fill="#e0e2e6"/><rect x="4" y="7.3" width="9" height="2.6" fill="#4a4a4a"/></svg>
<div class="t" style="left:520px;top:102.05px;font-size:16.5px;color:#e4e6e9;transform:scaleX(0.9307);transform-origin:0 0;">42 %</div>
<svg style="left:576.5px;top:103px;" width="17" height="17" viewBox="0 0 17 17"><circle cx="8.5" cy="8.5" r="8.3" fill="#e0e2e6"/><rect x="4" y="7.3" width="9" height="2.6" fill="#4a4a4a"/><rect x="7.2" y="4" width="2.6" height="9" fill="#4a4a4a"/></svg>
<div class="a" style="left:417px;top:686px;width:1339px;height:276px;background:#3a404d;border-radius:6px 6px 0 0;"></div>
<div class="t" style="left:427px;top:698.55px;font-size:16.5px;color:#e6e8eb;font-weight:bold;transform:scaleX(0.9966);transform-origin:0 0;">Animations:</div>
<div class="t" style="left:683px;top:698.55px;font-size:16.5px;color:#e6e8eb;font-weight:bold;transform:scaleX(1.0038);transform-origin:0 0;">Animation Frames:</div>
<div class="a" style="left:495.5px;top:727px;width:1px;height:32px;background:#444a57;border-radius:0px;"></div>
<div class="a" style="left:539.5px;top:727px;width:1px;height:32px;background:#444a57;border-radius:0px;"></div>
<div class="a" style="left:861.5px;top:727px;width:1px;height:32px;background:#444a57;border-radius:0px;"></div>
<div class="a" style="left:941px;top:727px;width:1px;height:32px;background:#444a57;border-radius:0px;"></div>
<div class="a" style="left:1020px;top:727px;width:1px;height:32px;background:#444a57;border-radius:0px;"></div>
<div class="a" style="left:1100px;top:727px;width:1px;height:32px;background:#444a57;border-radius:0px;"></div>
<div class="a" style="left:1215px;top:727px;width:1px;height:32px;background:#444a57;border-radius:0px;"></div>
<svg style="left:430.5px;top:734px;" width="17" height="18" viewBox="0 0 17 18"><path d="M1 1 H8.5 L13 5.5 V17 H1Z" fill="#e0e2e6"/><path d="M8.5 1 V5.5 H13" fill="#353b47" opacity="0.6"/><path d="M10.5 9 h3 v3 h3 v3 h-3 v3 h-3 v-3 h-3 v-3 h3z" fill="#44d35a" stroke="#353b47" stroke-width="0.8"/></svg>
<svg style="left:466px;top:734.5px;" width="17" height="17" viewBox="0 0 17 17"><g fill="#e0e2e6"><rect x="0.5" y="2" width="16" height="2.2" rx="1"/><rect x="6" y="0" width="5" height="2.5"/><path d="M2 5.5 H15 V15 a1.5 1.5 0 0 1 -1.5 1.5 H3.5 A1.5 1.5 0 0 1 2 15Z"/></g><g fill="#353b47"><rect x="4.8" y="7" width="1.8" height="8"/><rect x="7.6" y="7" width="1.8" height="8"/><rect x="10.4" y="7" width="1.8" height="8"/></g></svg>
<svg style="left:508px;top:734px;" width="19" height="17" viewBox="0 0 19 17"><path d="M2.7 2.6 H11.8 L16.4 8.5 L11.8 14.4 H2.7Z" stroke="#e0e2e6" stroke-width="2.2" fill="none"/><path d="M4.4 13 L6.3 5.3 H8 L9.9 13 H8.3 L8 11.4 H6.3 L6 13Z M6.6 10 H7.7 L7.15 7.3Z" fill="#e0e2e6" fill-rule="evenodd"/><path d="M11 7 L13 8.7 L11 10.4Z" fill="#e0e2e6"/></svg>
<div class="a" style="left:545px;top:727px;width:31px;height:32px;background:#262b34;border-radius:4px;"></div>
<svg style="left:551px;top:733px;" width="20" height="20" viewBox="0 0 20 20"><g stroke="#66b6f6" stroke-width="2.3" fill="none"><path d="M4.3 12 A6 6 0 0 1 10 4"/><path d="M15.7 8 A6 6 0 0 1 10 16"/></g><g fill="#66b6f6"><path d="M9.3 0.9 L13.8 4 L9.3 7.1Z"/><path d="M10.7 12.9 L6.2 16 L10.7 19.1Z"/></g></svg>
<div class="a" style="left:581px;top:727px;width:70px;height:32px;background:#262b34;border-radius:4px;"></div>
<div class="t" style="left:588px;top:732.55px;font-size:16.5px;color:#d8dbe0;transform:scaleX(0.8724);transform-origin:0 0;">5 FPS</div>
<svg style="left:654px;top:734px;" width="14" height="18" viewBox="0 0 14 18"><g stroke="#d0d3d8" stroke-width="1.9" fill="none"><path d="M1.5 6 L7 1.5 L12.5 6"/><path d="M1.5 12 L7 16.5 L12.5 12"/></g></svg>
<svg style="left:689px;top:736px;" width="12" height="13" viewBox="0 0 12 13"><path d="M11 0.5 V12.5 L1 6.5Z" fill="#e0e2e6"/></svg>
<svg style="left:722px;top:736px;" width="17" height="13" viewBox="0 0 17 13"><path d="M10 0.5 V12.5 L1 6.5Z" fill="#e0e2e6"/><rect x="11.5" y="0.5" width="3.5" height="12" rx="1" fill="#e0e2e6"/></svg>
<div class="a" style="left:761px;top:736.5px;width:12px;height:12px;background:#e0e2e6;border-radius:1.5px;"></div>
<svg style="left:795px;top:736px;" width="17" height="13" viewBox="0 0 17 13"><rect x="1" y="0.5" width="3.5" height="12" rx="1" fill="#e0e2e6"/><path d="M6.5 0.5 V12.5 L15.5 6.5Z" fill="#e0e2e6"/></svg>
<svg style="left:834px;top:736px;" width="12" height="13" viewBox="0 0 12 13"><path d="M1 0.5 V12.5 L11 6.5Z" fill="#e0e2e6"/></svg>
<svg style="left:874px;top:734px;" width="18" height="17" viewBox="0 0 18 17"><path d="M1.5 15.5 V2.5 a1 1 0 0 1 1 -1 H6.5 L8.5 3.5 H13 V6" stroke="#e0e2e6" stroke-width="1.4" fill="none"/><path d="M3.5 7 H17 L14.5 16 H1.5Z" fill="#e0e2e6"/></svg>
<svg style="left:910.5px;top:734px;" width="17" height="17" viewBox="0 0 17 17"><rect x="0.5" y="0.5" width="16" height="16" rx="2" fill="#e0e2e6"/><g fill="#353b47"><rect x="3" y="3" width="2.4" height="2.4"/><rect x="7.3" y="3" width="2.4" height="2.4"/><rect x="11.6" y="3" width="2.4" height="2.4"/><rect x="3" y="7.3" width="2.4" height="2.4"/><rect x="7.3" y="7.3" width="2.4" height="2.4"/><rect x="11.6" y="7.3" width="2.4" height="2.4"/><rect x="3" y="11.6" width="2.4" height="2.4"/><rect x="7.3" y="11.6" width="2.4" height="2.4"/><rect x="11.6" y="11.6" width="2.4" height="2.4"/></g></svg>
<svg style="left:953.5px;top:734px;" width="17" height="17" viewBox="0 0 17 17"><g stroke="#e0e2e6" stroke-width="1.8" fill="none"><path d="M1 12 V1 H12"/><rect x="4.5" y="4.5" width="11" height="11.5"/></g></svg>
<svg style="left:990px;top:734px;" width="17" height="17" viewBox="0 0 17 17"><g stroke="#e0e2e6" stroke-width="1.9" fill="none"><rect x="1" y="3.5" width="15" height="12.5"/><path d="M6 4 V1 H11 V4"/></g></svg>
<svg style="left:1033px;top:734px;" width="18" height="18" viewBox="0 0 18 18"><rect x="7" y="1" width="7.5" height="7" rx="2.5" fill="#e0e2e6"/><path d="M1 4.5 L4 1.5 M1 4.5 L4 7.5 M1 4.5 H6" stroke="#e0e2e6" stroke-width="1.8" fill="none"/><path d="M11 10 h2.4 v2.4 h2.4 v2.4 h-2.4 v2.4 h-2.4 v-2.4 h-2.4 v-2.4 h2.4z" fill="#44d35a"/></svg>
<svg style="left:1069px;top:734px;" width="18" height="18" viewBox="0 0 18 18"><rect x="1" y="1" width="7.5" height="7" rx="2.5" fill="#e0e2e6"/><path d="M16.5 4.5 L13.5 1.5 M16.5 4.5 L13.5 7.5 M16.5 4.5 H10" stroke="#e0e2e6" stroke-width="1.8" fill="none"/><path d="M11 10 h2.4 v2.4 h2.4 v2.4 h-2.4 v2.4 h-2.4 v-2.4 h-2.4 v-2.4 h2.4z" fill="#44d35a"/></svg>
<svg style="left:1113px;top:735px;" width="17" height="15" viewBox="0 0 17 15"><g stroke="#e0e2e6" stroke-width="2" fill="none" stroke-linecap="round"><path d="M6 2 L1.5 7 L6 12"/><path d="M1.5 7 H10"/></g><rect x="13" y="4.5" width="2" height="5" fill="#e0e2e6"/></svg>
<svg style="left:1149px;top:735px;" width="17" height="15" viewBox="0 0 17 15"><rect x="1" y="4.5" width="2" height="5" fill="#e0e2e6"/><g stroke="#e0e2e6" stroke-width="2" fill="none" stroke-linecap="round"><path d="M10 2 L14.5 7 L10 12"/><path d="M14.5 7 H6"/></g></svg>
<svg style="left:1185.5px;top:734.5px;" width="17" height="17" viewBox="0 0 17 17"><g fill="#e0e2e6"><rect x="0.5" y="2" width="16" height="2.2" rx="1"/><rect x="6" y="0" width="5" height="2.5"/><path d="M2 5.5 H15 V15 a1.5 1.5 0 0 1 -1.5 1.5 H3.5 A1.5 1.5 0 0 1 2 15Z"/></g><g fill="#353b47"><rect x="4.8" y="7" width="1.8" height="8"/><rect x="7.6" y="7" width="1.8" height="8"/><rect x="10.4" y="7" width="1.8" height="8"/></g></svg>
<div class="t" style="left:1226px;top:733.55px;font-size:16.5px;color:#cfd2d7;transform:scaleX(1.0109);transform-origin:0 0;">Frame Duration:</div>
<div class="a" style="left:1356px;top:727px;width:70px;height:32px;background:#262b34;border-radius:4px;"></div>
<div class="t" style="left:1363px;top:733.55px;font-size:16.5px;color:#cfd2d7;transform:scaleX(0.8548);transform-origin:0 0;">× 1</div>
<svg style="left:1429px;top:734px;" width="14" height="18" viewBox="0 0 14 18"><g stroke="#d0d3d8" stroke-width="1.9" fill="none"><path d="M1.5 6 L7 1.5 L12.5 6"/><path d="M1.5 12 L7 16.5 L12.5 12"/></g></svg>
<svg style="left:1653.5px;top:733.5px;" width="18" height="18" viewBox="0 0 18 18"><circle cx="9" cy="9" r="8.6" fill="#e0e2e6"/><rect x="4.3" y="7.7" width="9.4" height="2.7" fill="#353b47"/></svg>
<svg style="left:1689.5px;top:733.5px;" width="18" height="18" viewBox="0 0 18 18"><circle cx="9" cy="9" r="8.6" fill="#e0e2e6"/><path d="M7 5.5 L9.8 4 H10.8 V14 H8.3 V7 L7 7.5Z" fill="#353b47"/></svg>
<svg style="left:1726px;top:733.5px;" width="18" height="18" viewBox="0 0 18 18"><circle cx="9" cy="9" r="8.6" fill="#e0e2e6"/><rect x="4.3" y="7.7" width="9.4" height="2.7" fill="#353b47"/><rect x="7.65" y="4.3" width="2.7" height="9.4" fill="#353b47"/></svg>
<div class="a" style="left:422px;top:763.5px;width:247px;height:32px;background:#282c35;border-radius:4px;"></div>
<div class="t" style="left:429px;top:769.55px;font-size:16.5px;color:#b4b8bf;transform:scaleX(1.0332);transform-origin:0 0;">Filter Animations</div>
<svg style="left:643px;top:769px;" width="18" height="18" viewBox="0 0 18 18"><g stroke="#e0e2e6" stroke-width="2.2" fill="none" stroke-linecap="round"><circle cx="7" cy="7" r="5.2"/><line x1="11" y1="11" x2="16" y2="16"/></g></svg>
<div class="a" style="left:422px;top:800px;width:247px;height:162px;background:#242830;border-radius:4px 4px 0 0;"></div>
<div class="a" style="left:440.5px;top:804.5px;width:224.5px;height:31.5px;background:#3b5677;border-radius:4px;"></div>
<div class="t" style="left:445px;top:811.05px;font-size:16.5px;color:#eef0f3;transform:scaleX(1.0497);transform-origin:0 0;">default</div>
<svg style="left:427px;top:955px;" width="28" height="14" viewBox="0 0 28 14"><circle cx="14" cy="14" r="12" fill="#f01c3a"/></svg>
<div class="a" style="left:678.5px;top:763.5px;width:1072px;height:199px;background:#242830;border-radius:4px 4px 0 0;"></div>
<svg style="left:1029px;top:846.5px;" width="15" height="16" viewBox="0 0 15 16"><path d="M0.5 0.5 H9 L14.5 5.5 V15.5 H0.5Z" fill="#dadcdf"/><path d="M9 0.5 V5.5 H14.5" fill="#2a2e36" opacity="0.55"/></svg>
<div class="t" style="left:1055px;top:845.05px;font-size:16.5px;color:#c9ccd1;transform:scaleX(0.9690);transform-origin:0 0;">Attack__000.png</div>
<svg style="left:1029px;top:880px;" width="15" height="16" viewBox="0 0 15 16"><path d="M0.5 0.5 H9 L14.5 5.5 V15.5 H0.5Z" fill="#dadcdf"/><path d="M9 0.5 V5.5 H14.5" fill="#2a2e36" opacity="0.55"/></svg>
<div class="t" style="left:1055px;top:878.55px;font-size:16.5px;color:#c9ccd1;transform:scaleX(0.9690);transform-origin:0 0;">Attack__001.png</div>
<svg style="left:1029px;top:913.5px;" width="15" height="16" viewBox="0 0 15 16"><path d="M0.5 0.5 H9 L14.5 5.5 V15.5 H0.5Z" fill="#dadcdf"/><path d="M9 0.5 V5.5 H14.5" fill="#2a2e36" opacity="0.55"/></svg>
<div class="t" style="left:1055px;top:912.05px;font-size:16.5px;color:#c9ccd1;transform:scaleX(0.9690);transform-origin:0 0;">Attack__002.png</div>
<svg style="left:1029px;top:947px;" width="15" height="16" viewBox="0 0 15 16"><path d="M0.5 0.5 H9 L14.5 5.5 V15.5 H0.5Z" fill="#dadcdf"/><path d="M9 0.5 V5.5 H14.5" fill="#2a2e36" opacity="0.55"/></svg>
<div class="t" style="left:1055px;top:945.55px;font-size:16.5px;color:#c9ccd1;transform:scaleX(0.9690);transform-origin:0 0;">Attack__003.png</div>
<svg style="left:1026px;top:839px;" width="18" height="26" viewBox="0 0 18 26"><path d="M1.5 1.5 V20 L6 15.8 L9.2 23 L12.3 21.6 L9.2 14.6 H15.2Z" fill="#f2f2f2" stroke="#1a1a1a" stroke-width="1.2"/></svg>
<div class="a" style="left:1764px;top:4px;width:325px;height:958px;background:#3a404d;border-radius:6px 0 0 0;"></div>
<div class="a" style="left:1860px;top:4px;width:229px;height:31px;background:#292d36;border-radius:0px;"></div>
<div class="a" style="left:1765px;top:3px;width:95px;height:3px;background:#68a1dc;border-radius:0px;"></div>
<div class="t" style="left:1777px;top:9.85px;font-size:16.5px;color:#e0e2e6;transform:scaleX(1.0315);transform-origin:0 0;">Inspector</div>
<div class="t" style="left:1873px;top:9.85px;font-size:16.5px;color:#9ea2a9;transform:scaleX(0.9888);transform-origin:0 0;">Node</div>
<div class="t" style="left:1938px;top:9.85px;font-size:16.5px;color:#9ea2a9;transform:scaleX(1.0324);transform-origin:0 0;">History</div>
<svg style="left:1777px;top:48px;" width="17" height="18" viewBox="0 0 17 18"><path d="M1 1 H8.5 L13 5.5 V17 H1Z" fill="#e0e2e6"/><path d="M8.5 1 V5.5 H13" fill="#353b47" opacity="0.6"/><path d="M10.5 9 h3 v3 h3 v3 h-3 v3 h-3 v-3 h-3 v-3 h3z" fill="#44d35a" stroke="#353b47" stroke-width="0.8"/></svg>
<svg style="left:1812px;top:49px;" width="18" height="16" viewBox="0 0 18 16"><path d="M1.5 14.5 V2.5 a1 1 0 0 1 1 -1 H6.5 L8.5 3.5 H13 V6" stroke="#e0e2e6" stroke-width="1.4" fill="none"/><path d="M3.5 6.5 H17 L14.5 15 H1.5Z" fill="#e0e2e6"/></svg>
<svg style="left:1849.5px;top:48.5px;" width="17" height="17" viewBox="0 0 17 17"><path d="M1 1 H13 L16 4 V16 H1Z" fill="#8b8f96"/><rect x="4" y="1" width="8" height="5" fill="#353b47"/><circle cx="8.5" cy="11" r="2" fill="#353b47"/></svg>
<svg style="left:1890px;top:45px;" width="8" height="24" viewBox="0 0 8 24"><g fill="#e0e2e6"><circle cx="4" cy="5.2" r="2.3"/><circle cx="4" cy="12" r="2.3"/><circle cx="4" cy="18.8" r="2.3"/></g></svg>
<svg style="left:2080px;top:49px;" width="10" height="16" viewBox="0 0 10 16"><path d="M8 1.5 L2 8 L8 14.5" stroke="#e0e2e6" stroke-width="2" fill="none"/></svg>
<div class="a" style="left:1770px;top:76.5px;width:319px;height:32px;background:#262a32;border-radius:4px 0 0 4px;"></div>
<svg style="left:1773.5px;top:82px;" width="20" height="20" viewBox="0 0 20 20"><g transform="scale(1.0)" transform-origin="10 10"><rect x="5.7" y="0.7" width="12.8" height="12.8" rx="3" fill="#7489d0"/><rect x="3.7" y="3" width="12.6" height="12.6" rx="3" fill="#8298e0"/><rect x="1.7" y="5.3" width="12.5" height="12.5" rx="3" fill="#8fa8f5"/><ellipse cx="4.4" cy="11.2" rx="1.1" ry="1.5" fill="#2d3a60"/><ellipse cx="11.6" cy="11.2" rx="1.1" ry="1.5" fill="#2d3a60"/><path d="M5.3 13.8 H10.8 Q10.3 16.1 8 16.1 Q5.8 16.1 5.3 13.8Z" fill="#2d3a60"/></g></svg>
<div class="t" style="left:1801px;top:83.55px;font-size:16.5px;color:#e8eaee;transform:scaleX(1.0157);transform-origin:0 0;">AnimatedSprite2D</div>
<div class="a" style="left:1770px;top:114px;width:319px;height:31px;background:#262a32;border-radius:4px 0 0 4px;"></div>
<div class="t" style="left:1776px;top:120.55px;font-size:16.5px;color:#b9bcc2;transform:scaleX(1.0220);transform-origin:0 0;">Filter Properties</div>
<div class="a" style="left:1769px;top:149px;width:320px;height:813px;background:#3b414d;border-radius:5px 0 0 0;"></div>
<div class="a" style="left:1771px;top:151px;width:318px;height:811px;background:#262a31;border-radius:4px 0 0 0;"></div>
<div class="a" style="left:1774px;top:155.5px;width:315px;height:26px;background:#40444c;border-radius:4px 0 0 4px;"></div>
<svg style="left:1877px;top:157.5px;" width="20" height="20" viewBox="0 0 20 20"><g transform="scale(1.0)" transform-origin="10 10"><rect x="5.7" y="0.7" width="12.8" height="12.8" rx="3" fill="#7489d0"/><rect x="3.7" y="3" width="12.6" height="12.6" rx="3" fill="#8298e0"/><rect x="1.7" y="5.3" width="12.5" height="12.5" rx="3" fill="#8fa8f5"/><ellipse cx="4.4" cy="11.2" rx="1.1" ry="1.5" fill="#2d3a60"/><ellipse cx="11.6" cy="11.2" rx="1.1" ry="1.5" fill="#2d3a60"/><path d="M5.3 13.8 H10.8 Q10.3 16.1 8 16.1 Q5.8 16.1 5.3 13.8Z" fill="#2d3a60"/></g></svg>
<div class="t" style="left:1904px;top:157.05px;font-size:16.5px;color:#e6e8eb;font-weight:bold;transform:scaleX(1.0208);transform-origin:0 0;">AnimatedSprite2D</div>
<div class="a" style="left:1773px;top:181.5px;width:316px;height:27px;background:#2b2f37;border-radius:0px;"></div>
<svg style="left:1777.5px;top:190.5px;" width="9.0" height="9.0" viewBox="0 0 9.0 9.0"><path d="M1 2.5 L4.5 6.5 L8.0 2.5" stroke="#9ea2a9" stroke-width="1.8" fill="none"/></svg>
<div class="t" style="left:1790px;top:183.55px;font-size:16.5px;color:#e6e8eb;font-weight:bold;transform:scaleX(1.0166);transform-origin:0 0;">Animation</div>
<div class="a" style="left:1787.5px;top:208.5px;width:301.5px;height:35px;background:#41709e;border-radius:4px 0 0 0;"></div>
<div class="t" style="left:1796px;top:214.55px;font-size:16.5px;color:#f0f2f5;transform:scaleX(0.9942);transform-origin:0 0;">Sprite Frames</div>
<svg style="left:1950px;top:216px;" width="20" height="20" viewBox="0 0 20 20"><path d="M11.5 15.3 A6.3 6.3 0 1 0 5 8.5" stroke="#e0e2e6" stroke-width="2.3" fill="none"/><path d="M1.8 8.2 H8.2 L5 12.5Z" fill="#e0e2e6"/></svg>
<div class="a" style="left:1972.5px;top:208.5px;width:116.5px;height:32px;background:#23272e;border-radius:4px 0 0 4px;"></div>
<svg style="left:1979px;top:215px;" width="20" height="20" viewBox="0 0 20 20"><rect x="1" y="1.7" width="12" height="12.3" rx="3" fill="#6bb5f8"/><ellipse cx="4" cy="7.2" rx="1.1" ry="1.5" fill="#0f2540"/><ellipse cx="10" cy="7.2" rx="1.1" ry="1.5" fill="#0f2540"/><rect x="5.5" y="10.6" width="3" height="1" rx="0.5" fill="#0f2540"/><g fill="#8dc4f5"><rect x="14.9" y="2" width="2.3" height="2.3"/><rect x="14.9" y="6.6" width="2.3" height="2.3"/><rect x="14.9" y="11.2" width="2.3" height="2.3"/><rect x="14.9" y="15.9" width="2.3" height="2.3"/><rect x="1" y="15.9" width="2.3" height="2.3"/><rect x="5.7" y="15.9" width="2.3" height="2.3"/><rect x="10.3" y="15.9" width="2.3" height="2.3"/></g></svg>
<div class="t" style="left:2012px;top:215.05px;font-size:16.5px;color:#74b6f2;transform:scaleX(1.0099);transform-origin:0 0;">SpriteFrames</div>
<div class="a" style="left:1787.5px;top:241.5px;width:301.5px;height:36px;background:#4a7fb5;border-radius:0 0 0 4px;"></div>
<div class="a" style="left:1789px;top:243.5px;width:300px;height:32px;background:#2e343e;border-radius:0 0 0 3px;"></div>
<svg style="left:1797.5px;top:253.5px;" width="9.0" height="9.0" viewBox="0 0 9.0 9.0"><path d="M2.3 0.3 L6.8 4.5 L2.3 8.7" stroke="#9ea2a9" stroke-width="1.7" fill="none"/></svg>
<div class="t" style="left:1808px;top:249.05px;font-size:16.5px;color:#e6e8eb;font-weight:bold;transform:scaleX(0.9442);transform-origin:0 0;">Resource</div>
<div class="t" style="left:1796px;top:288.05px;font-size:16.5px;color:#b4b8bf;transform:scaleX(0.9950);transform-origin:0 0;">Animation</div>
<div class="a" style="left:1972.5px;top:281.5px;width:116.5px;height:33px;background:#22252c;border-radius:4px 0 0 4px;"></div>
<div class="t" style="left:1979.5px;top:289.05px;font-size:16.5px;color:#dfe1e5;transform:scaleX(1.0497);transform-origin:0 0;">default</div>
<div class="t" style="left:1796px;top:324.55px;font-size:16.5px;color:#b4b8bf;transform:scaleX(0.9650);transform-origin:0 0;">Frame</div>
<div class="a" style="left:1972.5px;top:318px;width:116.5px;height:33px;background:#22252c;border-radius:4px 0 0 4px;"></div>
<div class="t" style="left:1990.5px;top:325.55px;font-size:16.5px;color:#dfe1e5;transform:scaleX(0.9809);transform-origin:0 0;">0</div>
<div class="t" style="left:1796px;top:361.05px;font-size:16.5px;color:#b4b8bf;transform:scaleX(0.9405);transform-origin:0 0;">Speed Scale</div>
<div class="a" style="left:1972.5px;top:354.5px;width:116.5px;height:33px;background:#22252c;border-radius:4px 0 0 4px;"></div>
<div class="t" style="left:1991px;top:362.05px;font-size:16.5px;color:#dfe1e5;transform:scaleX(0.8719);transform-origin:0 0;">1</div>
<div class="a" style="left:1773px;top:389.5px;width:316px;height:26.0px;background:#2b2f37;border-radius:0px;"></div>
<svg style="left:1778px;top:398.5px;" width="10" height="10" viewBox="0 0 10 10"><path d="M2.8 0.3 L7.3 5 L2.8 9.7" stroke="#9ea2a9" stroke-width="1.7" fill="none"/></svg>
<div class="t" style="left:1790px;top:393.05px;font-size:16.5px;color:#e6e8eb;font-weight:bold;transform:scaleX(1.0280);transform-origin:0 0;">Offset</div>
<div class="a" style="left:1774px;top:416.5px;width:315px;height:26.0px;background:#40444c;border-radius:4px 0 0 4px;"></div>
<svg style="left:1922.2px;top:421.7px;" width="15.6" height="15.6" viewBox="0 0 15.6 15.6"><circle cx="7.8" cy="7.8" r="5.8" stroke="#8ea6f4" stroke-width="2.3" fill="none"/></svg>
<div class="t" style="left:1946px;top:420.55px;font-size:16.5px;color:#e6e8eb;font-weight:bold;transform:scaleX(1.0026);transform-origin:0 0;">Node2D</div>
<div class="a" style="left:1773px;top:442.5px;width:316px;height:27.0px;background:#2b2f37;border-radius:0px;"></div>
<svg style="left:1778px;top:452.0px;" width="10" height="10" viewBox="0 0 10 10"><path d="M2.8 0.3 L7.3 5 L2.8 9.7" stroke="#9ea2a9" stroke-width="1.7" fill="none"/></svg>
<div class="t" style="left:1790px;top:446.55px;font-size:16.5px;color:#e6e8eb;font-weight:bold;transform:scaleX(1.0039);transform-origin:0 0;">Transform</div>
<div class="a" style="left:1774px;top:469.5px;width:315px;height:26.0px;background:#40444c;border-radius:4px 0 0 4px;"></div>
<svg style="left:1906px;top:474px;" width="16" height="16" viewBox="0 0 16 16"><path d="M14.5 1.5 L6.5 9.5" stroke="#9a9da3" stroke-width="3.2" stroke-linecap="round"/><path d="M5 9 L7 11 L3.5 14.5 L1.5 14.5 L1.5 12.5Z" fill="#9a9da3"/></svg>
<div class="t" style="left:1930px;top:473.55px;font-size:16.5px;color:#e6e8eb;font-weight:bold;transform:scaleX(1.0203);transform-origin:0 0;">CanvasItem</div>
<div class="a" style="left:1773px;top:495.5px;width:316px;height:107px;background:#2b2f37;border-radius:0px;"></div>
<svg style="left:1778px;top:504.5px;" width="10" height="10" viewBox="0 0 10 10"><path d="M2.8 0.3 L7.3 5 L2.8 9.7" stroke="#9ea2a9" stroke-width="1.7" fill="none"/></svg>
<div class="t" style="left:1790px;top:499.05px;font-size:16.5px;color:#e6e8eb;font-weight:bold;transform:scaleX(1.0215);transform-origin:0 0;">Visibility</div>
<svg style="left:1778px;top:531px;" width="10" height="10" viewBox="0 0 10 10"><path d="M2.8 0.3 L7.3 5 L2.8 9.7" stroke="#9ea2a9" stroke-width="1.7" fill="none"/></svg>
<div class="t" style="left:1790px;top:525.55px;font-size:16.5px;color:#e6e8eb;font-weight:bold;transform:scaleX(1.0133);transform-origin:0 0;">Ordering</div>
<svg style="left:1778px;top:557.5px;" width="10" height="10" viewBox="0 0 10 10"><path d="M2.8 0.3 L7.3 5 L2.8 9.7" stroke="#9ea2a9" stroke-width="1.7" fill="none"/></svg>
<div class="t" style="left:1790px;top:552.05px;font-size:16.5px;color:#e6e8eb;font-weight:bold;transform:scaleX(1.0022);transform-origin:0 0;">Texture</div>
<svg style="left:1778px;top:584.5px;" width="10" height="10" viewBox="0 0 10 10"><path d="M2.8 0.3 L7.3 5 L2.8 9.7" stroke="#9ea2a9" stroke-width="1.7" fill="none"/></svg>
<div class="t" style="left:1790px;top:579.05px;font-size:16.5px;color:#e6e8eb;font-weight:bold;transform:scaleX(1.0681);transform-origin:0 0;">Material</div>
<div class="a" style="left:1774px;top:602.5px;width:315px;height:25.5px;background:#40444c;border-radius:4px 0 0 4px;"></div>
<svg style="left:1932.7px;top:607.7px;" width="15.6" height="15.6" viewBox="0 0 15.6 15.6"><circle cx="7.8" cy="7.8" r="5.8" stroke="#e0e2e6" stroke-width="2.3" fill="none"/></svg>
<div class="t" style="left:1955px;top:606.30px;font-size:16.5px;color:#e6e8eb;font-weight:bold;transform:scaleX(1.1152);transform-origin:0 0;">Node</div>
<div class="a" style="left:1773px;top:628px;width:316px;height:54.5px;background:#2b2f37;border-radius:0px;"></div>
<svg style="left:1778px;top:637.5px;" width="10" height="10" viewBox="0 0 10 10"><path d="M2.8 0.3 L7.3 5 L2.8 9.7" stroke="#9ea2a9" stroke-width="1.7" fill="none"/></svg>
<div class="t" style="left:1790px;top:632.05px;font-size:16.5px;color:#e6e8eb;font-weight:bold;transform:scaleX(0.9189);transform-origin:0 0;">Process</div>
<svg style="left:1778px;top:664.5px;" width="10" height="10" viewBox="0 0 10 10"><path d="M2.8 0.3 L7.3 5 L2.8 9.7" stroke="#9ea2a9" stroke-width="1.7" fill="none"/></svg>
<div class="t" style="left:1790px;top:659.05px;font-size:16.5px;color:#e6e8eb;font-weight:bold;transform:scaleX(1.0000);transform-origin:0 0;">Editor Description</div>
<div class="t" style="left:1783px;top:689.05px;font-size:16.5px;color:#b4b8bf;transform:scaleX(0.9721);transform-origin:0 0;">Script</div>
<div class="t" style="left:2013px;top:689.05px;font-size:16.5px;color:#d4d7dc;transform:scaleX(1.0124);transform-origin:0 0;">&lt;empty&gt;</div>
<div class="a" style="left:1864px;top:721.5px;width:202px;height:32.5px;background:#30353f;border-radius:4px;"></div>
<svg style="left:1871.5px;top:728.5px;" width="17" height="17" viewBox="0 0 17 17"><g stroke="#e0e2e6" stroke-width="2"><line x1="0" y1="8.5" x2="17" y2="8.5"/><line x1="8.5" y1="0" x2="8.5" y2="17"/></g></svg>
<div class="t" style="left:1925px;top:728.05px;font-size:16.5px;color:#d4d7dc;transform:scaleX(1.0124);transform-origin:0 0;">Add Metadata</div>
</body></html>
